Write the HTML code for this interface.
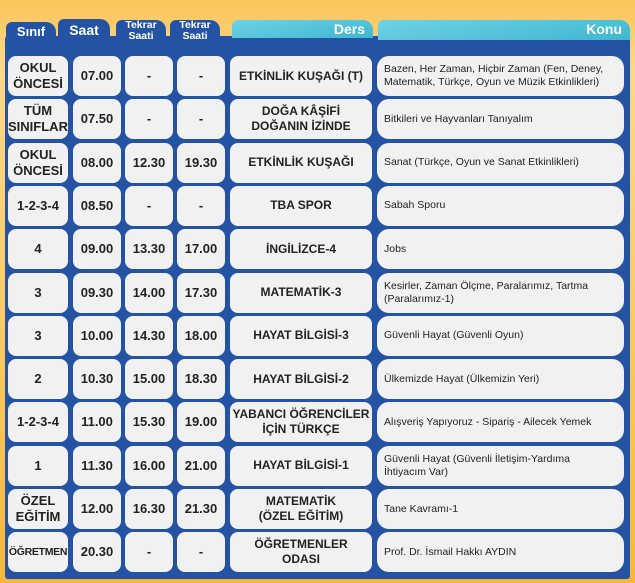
<!DOCTYPE html>
<html><head><meta charset="utf-8"><style>
*{margin:0;padding:0;box-sizing:border-box}
body{width:635px;height:583px;overflow:hidden;background:linear-gradient(180deg,#f9c45a 0%,#fcd987 12%,#f9cb62 55%,#f6b83a 100%);font-family:"Liberation Sans","DejaVu Sans",sans-serif;position:relative}
.panel{position:absolute;left:5px;top:36px;width:625px;height:543px;background:#2453a3;border-radius:3px}
.tab{position:absolute;background:#2453a3;color:#fff;font-weight:bold;text-align:center;border-radius:6px 10px 0 0}
.tab.c{background:linear-gradient(170deg,#6fd2e4,#3fb7d1);text-align:right;padding-right:8px;font-size:14px;line-height:18px}
.cell{position:absolute;background:#f1f1f1;border-radius:8px;display:flex;align-items:center;justify-content:center;text-align:center;font-weight:bold;color:#222;font-size:13px;line-height:16px}
.k{justify-content:flex-start;text-align:left;font-weight:normal;font-size:10.5px;line-height:13px;padding-left:7px;border-radius:12px}
</style></head><body>
<div class="panel"></div>
<div class="tab" style="left:6px;top:22px;width:50px;height:20px;font-size:13px;line-height:20px">Sınıf</div>
<div class="tab" style="left:58px;top:19px;width:52px;height:23px;font-size:14px;line-height:23px">Saat</div>
<div class="tab" style="left:116px;top:20px;width:50px;height:22px;font-size:10.5px;line-height:11px">Tekrar<br>Saati</div>
<div class="tab" style="left:170px;top:20px;width:50px;height:22px;font-size:10.5px;line-height:11px">Tekrar<br>Saati</div>
<div class="tab c" style="left:232px;top:20px;width:141px;height:18px">Ders</div>
<div class="tab c" style="left:378px;top:20px;width:252px;height:20px">Konu</div>
<div id="rows"></div>
<script>
var d=[["OKUL<br>ÖNCESİ","07.00","-","-","ETKİNLİK KUŞAĞI (T)","Bazen, Her Zaman, Hiçbir Zaman (Fen, Deney,<br>Matematik, Türkçe, Oyun ve Müzik Etkinlikleri)"],
["TÜM<br>SINIFLAR","07.50","-","-","DOĞA KÂŞİFİ<br>DOĞANIN İZİNDE","Bitkileri ve Hayvanları Tanıyalım"],
["OKUL<br>ÖNCESİ","08.00","12.30","19.30","ETKİNLİK KUŞAĞI","Sanat (Türkçe, Oyun ve Sanat Etkinlikleri)"],
["1-2-3-4","08.50","-","-","TBA SPOR","Sabah Sporu"],
["4","09.00","13.30","17.00","İNGİLİZCE-4","Jobs"],
["3","09.30","14.00","17.30","MATEMATİK-3","Kesirler, Zaman Ölçme, Paralarımız, Tartma<br>(Paralarımız-1)"],
["3","10.00","14.30","18.00","HAYAT BİLGİSİ-3","Güvenli Hayat (Güvenli Oyun)"],
["2","10.30","15.00","18.30","HAYAT BİLGİSİ-2","Ülkemizde Hayat (Ülkemizin Yeri)"],
["1-2-3-4","11.00","15.30","19.00","YABANCI ÖĞRENCİLER<br>İÇİN TÜRKÇE","Alışveriş Yapıyoruz - Sipariş - Ailecek Yemek"],
["1","11.30","16.00","21.00","HAYAT BİLGİSİ-1","Güvenli Hayat (Güvenli İletişim-Yardıma<br>İhtiyacım Var)"],
["ÖZEL<br>EĞİTİM","12.00","16.30","21.30","MATEMATİK<br>(ÖZEL EĞİTİM)","Tane Kavramı-1"],
["ÖĞRETMEN","20.30","-","-","ÖĞRETMENLER<br>ODASI","Prof. Dr. İsmail Hakkı AYDIN"]];
var cols=[[8,60],[73,48],[125,48],[177,48],[230,142],[377,247]];
var h="";
d.forEach(function(r,i){var y=56+i*43.3;
r.forEach(function(t,j){var c=cols[j];var st="left:"+c[0]+"px;top:"+y+"px;width:"+c[1]+"px;height:40px;";
if(j==0&&t=="ÖĞRETMEN")st+="font-size:10.5px;letter-spacing:-0.3px;";
if(j==4)st+="font-size:12px;line-height:15px;";
h+='<div class="cell'+(j==5?' k':'')+'" style="'+st+'">'+t+'</div>';});});
document.getElementById("rows").innerHTML=h;
</script>
</body></html>
